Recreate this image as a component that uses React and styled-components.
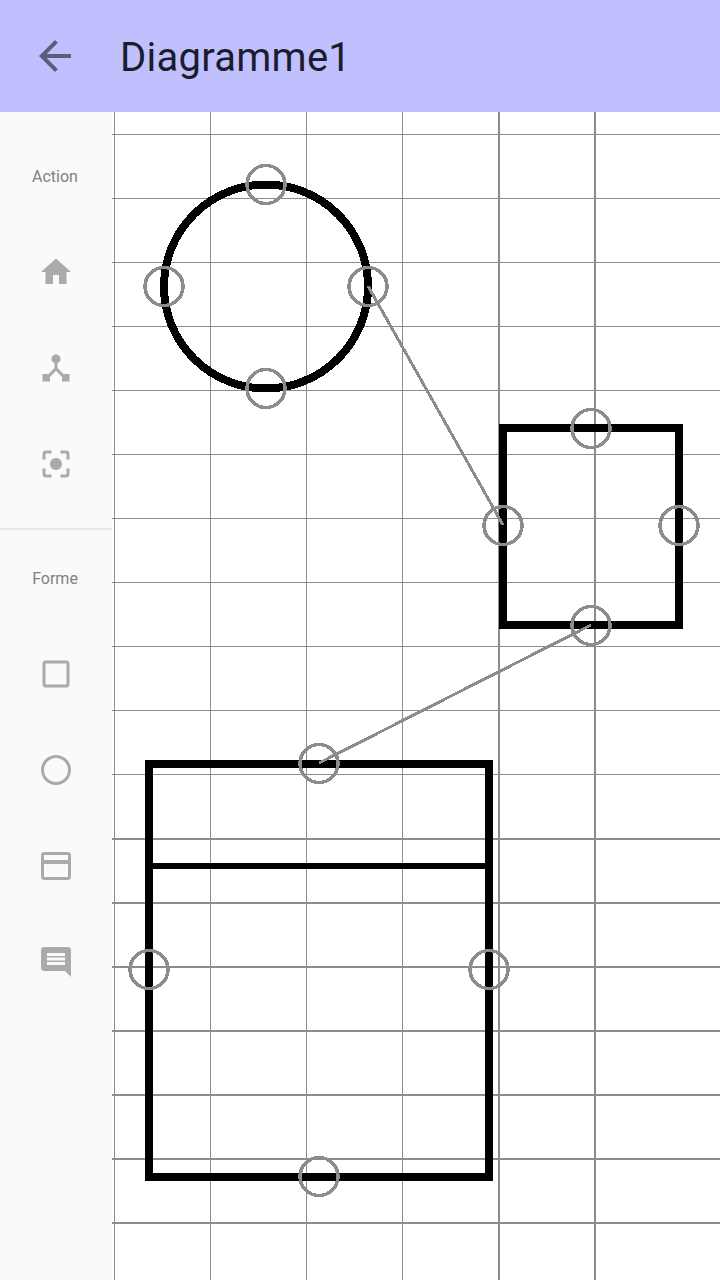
import React from "react";
import styled, { createGlobalStyle } from "styled-components";

const Global = createGlobalStyle`
  html, body { margin: 0; padding: 0; background: #fff; }
  body { font-family: Roboto, "Liberation Sans", sans-serif; }
`;
const Page = styled.div`
  width: 720px; height: 1280px; display: flex; flex-direction: column; overflow: hidden;
`;
const Header = styled.header`
  height: 112px; flex: none; background: #c0c0ff; display: flex; align-items: center;
`;
const BackButton = styled.div`
  width: 110px; height: 48px; display: flex; justify-content: center; align-items: center;
  svg { fill: #5c5c7a; display: block; }
`;
const Title = styled.h1`
  margin: 4px 0 0 10px; font: 400 40px/48px Roboto, sans-serif; letter-spacing: 0.25px; color: #1c1c2c;
`;
const Body = styled.div`
  flex: 1; display: flex; min-height: 0;
`;
const Sidebar = styled.aside`
  width: 112px; flex: none; background: #fafafa; display: flex; flex-direction: column;
`;
const Section = styled.section`
  display: flex; flex-direction: column; align-items: center; padding-top: ${p => p.$top}px;
`;
const Divider = styled.hr`
  margin: ${p => p.$top}px 0 0; border: 0; height: 2px; background: #e6e6e6; width: 112px;
`;
const Label = styled.div`
  width: 110px; text-align: center; margin-right: 2px; font-size: 16px; line-height: 20px; color: #808080; height: 20px;
`;
const ToolList = styled.div`
  margin-top: ${p => p.$top}px; display: flex; flex-direction: column; gap: 60px;
`;
const Tool = styled.div`
  width: 36px; height: 36px; svg { display: block; fill: #aaaaaa; }
`;
const Canvas = styled.svg`
  flex: 1; display: block; height: 1168px; shape-rendering: crispEdges;
`;

const Icon = ({ d }) => (
  <svg width="36" height="36" viewBox="0 0 24 24"><path d={d} /></svg>
);

const actionIcons = [
  "M10 20v-6h4v6h5v-8h3L12 3 2 12h3v8z",
  "M17 16l-4-4V8.82C14.16 8.4 15 7.3 15 6c0-1.66-1.34-3-3-3S9 4.34 9 6c0 1.3.84 2.4 2 2.82V12l-4 4H3v5h5v-3.05l4-4.2 4 4.2V21h5v-5h-4z",
  "M12 8c-2.21 0-4 1.79-4 4s1.79 4 4 4 4-1.79 4-4-1.79-4-4-4zm-7 7H3v4c0 1.1.9 2 2 2h4v-2H5v-4zM5 5h4V3H5c-1.1 0-2 .9-2 2v4h2V5zm14-2h-4v2h4v4h2V5c0-1.1-.9-2-2-2zm0 16h-4v2h4c1.1 0 2-.9 2-2v-4h-2v4z",
];
const shapeIcons = [
  "M19 5v14H5V5h14m0-2H5c-1.1 0-2 .9-2 2v14c0 1.1.9 2 2 2h14c1.1 0 2-.9 2-2V5c0-1.1-.9-2-2-2z",
  "M12 2C6.48 2 2 6.48 2 12s4.48 10 10 10 10-4.48 10-10S17.52 2 12 2zm0 18c-4.42 0-8-3.58-8-8s3.58-8 8-8 8 3.58 8 8-3.58 8-8 8z",
  "M20 2.67H4c-1.1 0-2 .9-2 2v14.66c0 1.1.9 2 2 2h16c1.1 0 2-.9 2-2V4.67c0-1.1-.9-2-2-2zM4 4.67h16V8H4V4.67zm16 14.66H4v-8.66h16v8.66z",
  "M21.99 4c0-1.1-.89-2-1.99-2H4c-1.1 0-2 .9-2 2v12c0 1.1.9 2 2 2h14l4 4-.01-18zM18 14H6v-2h12v2zm0-3H6V9h12v2zm0-3H6V6h12v2z",
];

const hLines = [134, 198, 262, 326, 390, 454, 518, 582, 646, 710, 774, 838, 902, 966, 1030, 1094, 1158, 1222];
const vLines = [114, 210, 306, 402, 498, 594];
const handles = [
  [266, 184], [164, 286], [368, 286], [266, 388],
  [591, 428], [503, 525], [679, 525], [591, 625],
  [319, 763], [149, 969], [489, 969], [319, 1176],
];
const GRID = "#8c8c8c";

export default function App() {
  return (
    <Page>
      <Global />
      <Header>
        <BackButton>
          <svg width="48" height="48" viewBox="0 0 24 24"><path d="M20 11H7.83l5.59-5.59L12 4l-8 8 8 8 1.41-1.41L7.83 13H20v-2z" /></svg>
        </BackButton>
        <Title>Diagramme1</Title>
      </Header>
      <Body>
        <Sidebar>
          <Section $top={55}>
            <Label>Action</Label>
            <ToolList $top={67}>
              {actionIcons.map((d, i) => <Tool key={i}><Icon d={d} /></Tool>)}
            </ToolList>
          </Section>
          <Divider $top={46} />
          <Section $top={39}>
            <Label>Forme</Label>
            <ToolList $top={67}>
              {shapeIcons.map((d, i) => <Tool key={i}><Icon d={d} /></Tool>)}
            </ToolList>
          </Section>
        </Sidebar>
        <Canvas viewBox="112 112 608 1168" width="608" height="1168">
          {hLines.map(y => (
            <line key={y} x1="112" x2="720" y1={y + 0.5} y2={y + 0.5} stroke={GRID} strokeWidth={y >= 838 ? 2 : 1.5} />
          ))}
          {vLines.map(x => (
            <line key={x} x1={x + 0.5} x2={x + 0.5} y1="112" y2="1280" stroke={GRID} strokeWidth={x >= 498 ? 2 : 1.5} />
          ))}
          <g fill="none" stroke="#000">
            <circle cx="266" cy="286.5" r="102" strokeWidth="8" />
            <rect x="503" y="428" width="176" height="197" strokeWidth="8" />
            <rect x="149" y="763.5" width="340" height="413" strokeWidth="8" />
            <line x1="149" x2="489" y1="866" y2="866" strokeWidth="6" />
          </g>
          <g stroke="#8c8c8c" strokeWidth="3">
            <line x1="368" y1="286" x2="503" y2="525" />
            <line x1="591" y1="625" x2="319" y2="763" />
          </g>
          <g fill="none" stroke="#8c8c8c" strokeWidth="3.5">
            {handles.map(([cx, cy]) => <circle key={`${cx}-${cy}`} cx={cx} cy={cy + 0.5} r="19" />)}
          </g>
        </Canvas>
      </Body>
    </Page>
  );
}
